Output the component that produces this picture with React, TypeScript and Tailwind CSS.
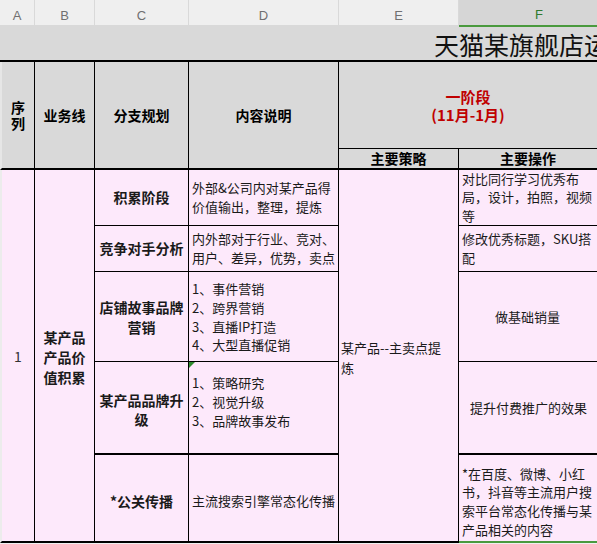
import React from "react";

const COLS = "grid grid-cols-[35px_60px_94px_150px_120px_160px]";

function Cell({
  className = "",
  children,
}: {
  className?: string;
  children?: React.ReactNode;
}) {
  return <div className={`flex overflow-hidden ${className}`}>{children}</div>;
}

export default function App() {
  return (
    <div className="relative h-[544px] w-[597px] overflow-hidden bg-[#efefef] font-['Noto_Sans_CJK_SC','Noto_Sans',sans-serif] text-[#1a1a1a]">
      {/* column letters */}
      <div className={`${COLS} h-[25px] bg-[#efefef] font-['Liberation_Sans',sans-serif] text-[13px] text-[#707070]`}>
        {["A", "B", "C", "D", "E"].map((l) => (
          <div key={l} className="flex items-center justify-center border-r border-[#d9d9d9] pt-[5px]">
            {l}
          </div>
        ))}
        <div className="flex items-center justify-center border-b-2 border-[#4a9a3e] bg-[#d6d6d6] pt-[5px] text-[#2f7a2f]">
          F
        </div>
      </div>

      {/* title row */}
      <div className="flex h-[37px] items-center overflow-hidden whitespace-nowrap border-b-2 border-black bg-[#d9d9d9] pl-[434px] pt-[3px] text-[25px] leading-none text-[#111]">
        天猫某旗舰店运营规划表
      </div>

      {/* header */}
      <div className={`${COLS} grid-rows-[87px_21px] bg-[#d9d9d9] text-[14px] font-bold leading-[16px] text-black`}>
        <Cell className="row-span-2 items-center justify-center border-b-2 border-l-2 border-r border-black border-l-[#e6e6e6] text-center">
          <div className="flex flex-col leading-[15px]">
            <span className="block h-[15px]">序</span>
            <span className="block h-[15px] mt-[1px]">列</span>
          </div>
        </Cell>
        <Cell className="row-span-2 items-center justify-center border-b-2 border-r border-black">业务线</Cell>
        <Cell className="row-span-2 items-center justify-center border-b-2 border-r border-black">分支规划</Cell>
        <Cell className="row-span-2 items-center justify-center border-b-2 border-r border-black">内容说明</Cell>
        <Cell className="col-span-2 items-center border-b border-black pl-[89px] pt-[1px] text-[15px] leading-[18px] text-[#c00000]">
          <div className="flex w-[80px] flex-col items-center whitespace-nowrap">
            <span className="block h-[18px]">一阶段</span>
            <span className="block h-[18px]">(11月-1月)</span>
          </div>
        </Cell>
        <Cell className="items-center justify-center border-b-2 border-r border-black pb-[1px]">主要策略</Cell>
        <Cell className="items-center justify-start border-b-2 border-black pb-[1px] pl-[41px]">主要操作</Cell>
      </div>

      {/* body */}
      <div className={`${COLS} grid-rows-[56px_46px_90px_93px_88px] bg-[#fde9fb] text-[13px] leading-[18.5px]`}>
        {/* A */}
        <Cell className="row-span-5 items-center justify-center border-b-2 border-l-2 border-r border-black border-l-[#ececec] pt-[1px] text-[14px] font-normal text-[#333]">
          1
        </Cell>
        {/* B */}
        <Cell className="row-span-5 items-center justify-center border-b-2 border-r border-black pt-[3px] text-center text-[14px] font-bold leading-[20px]">
          <div>
            某产品
            <br />
            产品价
            <br />
            值积累
          </div>
        </Cell>

        {/* row 1 */}
        <Cell className="items-center justify-center border-b border-r border-black text-[14px] font-bold">积累阶段</Cell>
        <Cell className="items-center border-b border-r border-black pl-[3px] whitespace-nowrap">
          <div>
            外部&amp;公司内对某产品得
            <br />
            价值输出，整理，提炼
          </div>
        </Cell>
        {/* E spans */}
        <Cell className="row-span-5 items-center border-b-2 border-r border-black pl-[2px] pt-[4px] whitespace-nowrap leading-[20px]">
          <div>
            某产品--主卖点提
            <br />
            炼
          </div>
        </Cell>
        <Cell className="items-center border-b border-black pl-[3px] whitespace-nowrap leading-[18.5px]">
          <div>
            对比同行学习优秀布
            <br />
            局，设计，拍照，视频
            <br />
            等
          </div>
        </Cell>

        {/* row 2 */}
        <Cell className="items-center justify-center border-b border-r border-black text-[14px] font-bold">竞争对手分析</Cell>
        <Cell className="items-center border-b border-r border-black pl-[3px] whitespace-nowrap">
          <div>
            内外部对于行业、竞对、
            <br />
            用户、差异，优势，卖点
          </div>
        </Cell>
        <Cell className="items-center border-b border-black pl-[3px] whitespace-nowrap">
          <div>
            修改优秀标题，SKU搭
            <br />
            配
          </div>
        </Cell>

        {/* row 3 */}
        <Cell className="items-center justify-center border-b border-r border-black text-center text-[14px] font-bold leading-[20px]">
          <div>
            店铺故事品牌
            <br />
            营销
          </div>
        </Cell>
        <Cell className="items-center border-b border-r border-black pl-[3px] pt-[2px] whitespace-nowrap leading-[18.7px]">
          <div>
            1、事件营销
            <br />
            2、跨界营销
            <br />
            3、直播IP打造
            <br />
            4、大型直播促销
          </div>
        </Cell>
        <Cell className="items-center border-b border-black pl-[36px] pt-[2px] whitespace-nowrap">做基础销量</Cell>

        {/* row 4 */}
        <Cell className="items-center justify-center border-b-2 border-r border-black pt-[4px] text-center text-[14px] font-bold leading-[18.5px]">
          <div>
            某产品品牌升
            <br />
            级
          </div>
        </Cell>
        <div className="relative flex items-center overflow-hidden border-b-2 border-r border-black pb-[12px] pl-[3px] whitespace-nowrap leading-[19px]">
          <div className="absolute left-0 top-0 h-0 w-0 border-r-[6px] border-t-[6px] border-r-transparent border-t-[#2e8b2e]" />
          <div>
            1、策略研究
            <br />
            2、视觉升级
            <br />
            3、品牌故事发布
          </div>
        </div>
        <Cell className="items-center border-b-2 border-black pl-[11px] pt-[2px] whitespace-nowrap">提升付费推广的效果</Cell>

        {/* row 5 */}
        <Cell className="items-center justify-center border-b-2 border-r border-black pt-[6px] text-[14px] font-bold">*公关传播</Cell>
        <Cell className="items-center border-b-2 border-r border-black pl-[3px] pt-[6px] whitespace-nowrap">主流搜索引擎常态化传播</Cell>
        <Cell className="items-center border-b-2 border-[#4a9a3e] pl-[3px] pt-[8px] whitespace-nowrap leading-[18.7px]">
          <div>
            *在百度、微博、小红
            <br />
            书，抖音等主流用户搜
            <br />
            索平台常态化传播与某
            <br />
            产品相关的内容
          </div>
        </Cell>
      </div>
    </div>
  );
}
